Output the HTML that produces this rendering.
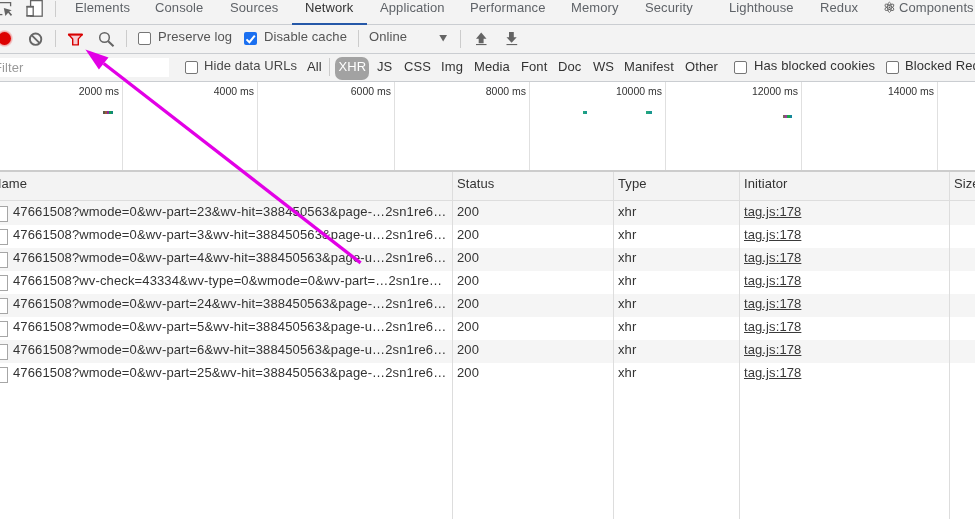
<!DOCTYPE html>
<html><head><meta charset="utf-8">
<style>
*{margin:0;padding:0;box-sizing:border-box}
#root{position:absolute;left:0;top:0;width:975px;height:519px;will-change:transform}
html,body{width:975px;height:519px;overflow:hidden;background:#fff}
body{position:relative;font-family:"Liberation Sans",sans-serif;font-size:13px;color:#333;letter-spacing:0.1px}
.a{position:absolute;white-space:nowrap}
.bar{position:absolute;left:0;width:975px;background:#f3f3f3}
.hl{position:absolute;left:0;width:975px;height:1px;background:#cacdd1}
.vs{position:absolute;width:1px;background:#ccc}
.tab{position:absolute;white-space:nowrap;font-size:13px;color:#5f6368;line-height:15px;top:0px}
.cb{position:absolute;width:13px;height:13px;border:1px solid #767676;border-radius:2px;background:#fff}
.ft{position:absolute;white-space:nowrap;top:59px;font-size:13px;color:#333;line-height:15px}
.tl{position:absolute;white-space:nowrap;top:85px;font-size:10.5px;color:#333;line-height:13px;letter-spacing:0}
.grid{position:absolute;top:82px;height:89px;width:1px;background:#e0e0e0}
.row{position:absolute;left:0;width:975px;height:23px}
.cell{position:absolute;white-space:nowrap;top:2px;font-size:13px;line-height:15px;color:#333}
.fi{position:absolute;left:-6px;top:4px;width:14px;height:16px;border:1px solid #a6a6a6;background:#fff}
.lnk{text-decoration:underline;color:#3a3a3a}
.col{position:absolute;top:172px;height:347px;width:1px;background:#ddd}
</style></head><body><div id="root">

<!-- tab bar -->
<div class="bar" style="top:0;height:24px"></div>
<div class="hl" style="top:24px"></div>
<div class="tab" style="left:75px">Elements</div>
<div class="tab" style="left:155px">Console</div>
<div class="tab" style="left:230px">Sources</div>
<div class="tab" style="left:305px;color:#333">Network</div>
<div class="a" style="left:292px;top:23px;width:75px;height:2px;background:#2558a8;z-index:2"></div>
<div class="tab" style="left:380px">Application</div>
<div class="tab" style="left:470px">Performance</div>
<div class="tab" style="left:571px">Memory</div>
<div class="tab" style="left:645px">Security</div>
<div class="tab" style="left:729px">Lighthouse</div>
<div class="tab" style="left:820px">Redux</div>
<div class="tab" style="left:899px">Components</div>
<div class="vs" style="left:55px;top:1px;height:16px"></div>
<!-- toolbar -->
<div class="bar" style="top:25px;height:28px"></div>
<div class="hl" style="top:53px"></div>
<div class="vs" style="left:55px;top:30px;height:17px"></div>
<div class="vs" style="left:126px;top:30px;height:17px"></div>
<div class="vs" style="left:358px;top:30px;height:17px"></div>
<div class="vs" style="left:460px;top:30px;height:18px"></div>
<div class="cb" style="left:138px;top:32px"></div>
<div class="a" style="left:158px;top:29px;color:#555">Preserve log</div>

<div class="a" style="left:264px;top:29px;color:#555">Disable cache</div>
<div class="a" style="left:369px;top:29px;color:#555">Online</div>

<!-- filter bar -->
<div class="bar" style="top:54px;height:27px"></div>
<div class="hl" style="top:81px"></div>
<div class="a" style="left:0;top:58px;width:169px;height:19px;background:#fff"></div>
<div class="a" style="left:-6px;top:60px;color:#999">Filter</div>
<div class="cb" style="left:185px;top:61px"></div>
<div class="ft" style="left:204px;top:58px;color:#484848">Hide data URLs</div>
<div class="ft" style="left:307px">All</div>
<div class="vs" style="left:329px;top:58px;height:18px"></div>
<div class="a" style="left:335px;top:57px;width:34px;height:23px;background:#a2a2a2;border-radius:7px"></div>
<div class="ft" style="left:338.5px;color:#fff">XHR</div>
<div class="ft" style="left:377px">JS</div>
<div class="ft" style="left:404px">CSS</div>
<div class="ft" style="left:441px">Img</div>
<div class="ft" style="left:474px">Media</div>
<div class="ft" style="left:521px">Font</div>
<div class="ft" style="left:558px">Doc</div>
<div class="ft" style="left:593px">WS</div>
<div class="ft" style="left:624px">Manifest</div>
<div class="ft" style="left:685px">Other</div>
<div class="cb" style="left:734px;top:61px"></div>
<div class="ft" style="left:754px;top:58px">Has blocked cookies</div>
<div class="cb" style="left:886px;top:61px"></div>
<div class="ft" style="left:905px;top:58px">Blocked Requests</div>

<!-- timeline -->
<div class="grid" style="left:122px"></div>
<div class="grid" style="left:257px"></div>
<div class="grid" style="left:394px"></div>
<div class="grid" style="left:529px"></div>
<div class="grid" style="left:665px"></div>
<div class="grid" style="left:801px"></div>
<div class="grid" style="left:937px"></div>
<div class="tl" style="right:856px">2000 ms</div>
<div class="tl" style="right:721px">4000 ms</div>
<div class="tl" style="right:584px">6000 ms</div>
<div class="tl" style="right:449px">8000 ms</div>
<div class="tl" style="right:313px">10000 ms</div>
<div class="tl" style="right:177px">12000 ms</div>
<div class="tl" style="right:41px">14000 ms</div>

<div class="hl" style="top:170px;height:2px;background:#ccc"></div>

<!-- table header -->
<div class="bar" style="top:172px;height:28px"></div>
<div class="hl" style="top:200px;background:#ddd"></div>
<div class="a" style="left:0;top:201px;width:975px;height:1px;background:#f5f5f5"></div>
<div class="cell" style="left:-8px;top:176px">Name</div>
<div class="cell" style="left:457px;top:176px">Status</div>
<div class="cell" style="left:618px;top:176px">Type</div>
<div class="cell" style="left:744px;top:176px">Initiator</div>
<div class="cell" style="left:954px;top:176px">Size</div>

<div class="row" style="top:202px;background:#f5f5f5"><div class="fi"></div><div class="cell" style="left:13px;letter-spacing:0.135px">47661508?wmode=0&amp;wv-part=23&amp;wv-hit=388450563&amp;page-…2sn1re6…</div><div class="cell" style="left:457px">200</div><div class="cell" style="left:618px">xhr</div><div class="cell lnk" style="left:744px">tag.js:178</div></div>
<div class="row" style="top:225px;background:#fff"><div class="fi"></div><div class="cell" style="left:13px;letter-spacing:0.135px">47661508?wmode=0&amp;wv-part=3&amp;wv-hit=388450563&amp;page-u…2sn1re6…</div><div class="cell" style="left:457px">200</div><div class="cell" style="left:618px">xhr</div><div class="cell lnk" style="left:744px">tag.js:178</div></div>
<div class="row" style="top:248px;background:#f5f5f5"><div class="fi"></div><div class="cell" style="left:13px;letter-spacing:0.135px">47661508?wmode=0&amp;wv-part=4&amp;wv-hit=388450563&amp;page-u…2sn1re6…</div><div class="cell" style="left:457px">200</div><div class="cell" style="left:618px">xhr</div><div class="cell lnk" style="left:744px">tag.js:178</div></div>
<div class="row" style="top:271px;background:#fff"><div class="fi"></div><div class="cell" style="left:13px;letter-spacing:0.135px">47661508?wv-check=43334&amp;wv-type=0&amp;wmode=0&amp;wv-part=…2sn1re…</div><div class="cell" style="left:457px">200</div><div class="cell" style="left:618px">xhr</div><div class="cell lnk" style="left:744px">tag.js:178</div></div>
<div class="row" style="top:294px;background:#f5f5f5"><div class="fi"></div><div class="cell" style="left:13px;letter-spacing:0.135px">47661508?wmode=0&amp;wv-part=24&amp;wv-hit=388450563&amp;page-…2sn1re6…</div><div class="cell" style="left:457px">200</div><div class="cell" style="left:618px">xhr</div><div class="cell lnk" style="left:744px">tag.js:178</div></div>
<div class="row" style="top:317px;background:#fff"><div class="fi"></div><div class="cell" style="left:13px;letter-spacing:0.135px">47661508?wmode=0&amp;wv-part=5&amp;wv-hit=388450563&amp;page-u…2sn1re6…</div><div class="cell" style="left:457px">200</div><div class="cell" style="left:618px">xhr</div><div class="cell lnk" style="left:744px">tag.js:178</div></div>
<div class="row" style="top:340px;background:#f5f5f5"><div class="fi"></div><div class="cell" style="left:13px;letter-spacing:0.135px">47661508?wmode=0&amp;wv-part=6&amp;wv-hit=388450563&amp;page-u…2sn1re6…</div><div class="cell" style="left:457px">200</div><div class="cell" style="left:618px">xhr</div><div class="cell lnk" style="left:744px">tag.js:178</div></div>
<div class="row" style="top:363px;background:#fff"><div class="fi"></div><div class="cell" style="left:13px;letter-spacing:0.135px">47661508?wmode=0&amp;wv-part=25&amp;wv-hit=388450563&amp;page-…2sn1re6…</div><div class="cell" style="left:457px">200</div><div class="cell" style="left:618px">xhr</div><div class="cell lnk" style="left:744px">tag.js:178</div></div>
<div class="col" style="left:452px"></div>
<div class="col" style="left:613px"></div>
<div class="col" style="left:739px"></div>
<div class="col" style="left:949px"></div>

<!-- icons -->
<svg class="a" style="left:0;top:0" width="60" height="24" viewBox="0 0 60 24">
 <g fill="none" stroke="#646464" stroke-width="1.3">
  <path d="M-2 2.6 H10.6 V6.3"/>
  <path d="M-2 14.6 H2.4"/>
 </g>
 <path d="M3.8 8 L11.7 10.3 L9.2 11.6 L12.1 14.8 L10.9 15.9 L8.1 12.8 L5.4 16 Z" fill="#646464"/>
 <rect x="30.6" y="0.6" width="11.6" height="15.6" fill="#fff" stroke="#646464" stroke-width="1.3"/>
 <rect x="27" y="6.8" width="6.2" height="9" fill="#fff" stroke="#646464" stroke-width="1.3"/>
 <rect x="26.4" y="5.8" width="7.4" height="1.6" fill="#646464"/>
 <rect x="26.4" y="15" width="7.4" height="1.6" fill="#646464"/>
</svg>
<svg class="a" style="left:0;top:25px" width="130" height="28" viewBox="0 25 130 28">
 <defs><radialGradient id="gl"><stop offset="0.7" stop-color="#f08a8a"/><stop offset="1" stop-color="#f08a8a" stop-opacity="0"/></radialGradient></defs><circle cx="4.5" cy="38.5" r="8.8" fill="url(#gl)"/>
 <circle cx="4.5" cy="38.5" r="6.4" fill="#dd0000"/>
 <g fill="none" stroke="#676767" stroke-width="1.9">
  <circle cx="35.6" cy="39.2" r="5.7"/>
  <path d="M31.6 35.2 L39.6 43.2"/>
 </g>
 <path d="M68.6 34.6 H82.2 L78.3 38.9 V44.9 H72.7 V38.9 Z" fill="#f6cdd3" stroke="#d80000" stroke-width="1.4" stroke-linejoin="round"/><rect x="68" y="33.6" width="14.8" height="1.9" rx="0.6" fill="#d80000"/>
 <g fill="none" stroke="#646464">
  <circle cx="104.5" cy="37.5" r="4.8" stroke-width="1.5"/>
  <path d="M108.2 41.2 L113.5 46.3" stroke-width="2"/>
 </g>
</svg>
<svg class="a" style="left:430px;top:25px" width="100" height="28" viewBox="430 25 100 28">
 <path d="M439.3 35 H447 L443.15 41.6 Z" fill="#646464"/>
 <path d="M481.2 32.4 L486.5 38.7 H483.6 V43.2 H478.7 V38.7 H476 Z" fill="#646464"/>
 <rect x="476" y="44" width="10.5" height="1.1" fill="#646464"/>
 <path d="M509 32.1 H513.8 V37.3 H516.7 L511.6 42.7 L506.5 37.3 H509 Z" fill="#646464"/>
 <rect x="506.5" y="44" width="10.7" height="1.1" fill="#646464"/>
</svg>
<svg class="a" style="left:878px;top:0" width="20" height="16" viewBox="878 0 20 16">
 <g fill="none" stroke="#606060" stroke-width="0.85">
  <ellipse cx="889.4" cy="7.3" rx="1.9" ry="5.1"/>
  <ellipse cx="889.4" cy="7.3" rx="1.9" ry="5.1" transform="rotate(60 889.4 7.3)"/>
  <ellipse cx="889.4" cy="7.3" rx="1.9" ry="5.1" transform="rotate(120 889.4 7.3)"/>
 </g>
 <circle cx="889.4" cy="7.3" r="0.9" fill="#5a5a5a"/>
</svg>
<svg class="a" style="left:244px;top:32px" width="14" height="14" viewBox="0 0 14 14">
 <rect x="0" y="0" width="13" height="13" rx="2" fill="#1a6ff0"/>
 <path d="M2.5 7.4 L5.4 10.2 L10.8 3.6" fill="none" stroke="#fff" stroke-width="2"/>
</svg>



<svg class="a" style="left:0;top:0" width="975" height="519" viewBox="0 0 975 519">
 <rect x="103" y="111" width="2" height="3" fill="#5a5a4a"/>
 <rect x="105" y="111" width="2" height="3" fill="#9a5a3a"/>
 <rect x="107" y="111" width="2" height="3" fill="#8a2a9a"/>
 <rect x="109" y="111" width="2" height="3" fill="#14a24a"/>
 <rect x="111" y="111" width="2" height="3" fill="#12887a"/>
 <rect x="583" y="111" width="2" height="3" fill="#22a57e"/>
 <rect x="585" y="111" width="2" height="3" fill="#1a9890"/>
 <rect x="646" y="111" width="3" height="3" fill="#22a57e"/>
 <rect x="649" y="111" width="3" height="3" fill="#1a9890"/>
 <rect x="783" y="115" width="2" height="3" fill="#7a6a5a"/>
 <rect x="785" y="115" width="2" height="3" fill="#9a3aa0"/>
 <rect x="787" y="115" width="3" height="3" fill="#1aa84a"/>
 <rect x="790" y="115" width="2" height="3" fill="#14889a"/>
 <path d="M103.7 63.45 L360.6 262.9" stroke="#e200e6" stroke-width="3.3" fill="none"/>
 <path d="M85.4 49.4 L108.5 57.5 L98.9 69.4 Z" fill="#e200e6"/>
</svg>
</div></body></html>
